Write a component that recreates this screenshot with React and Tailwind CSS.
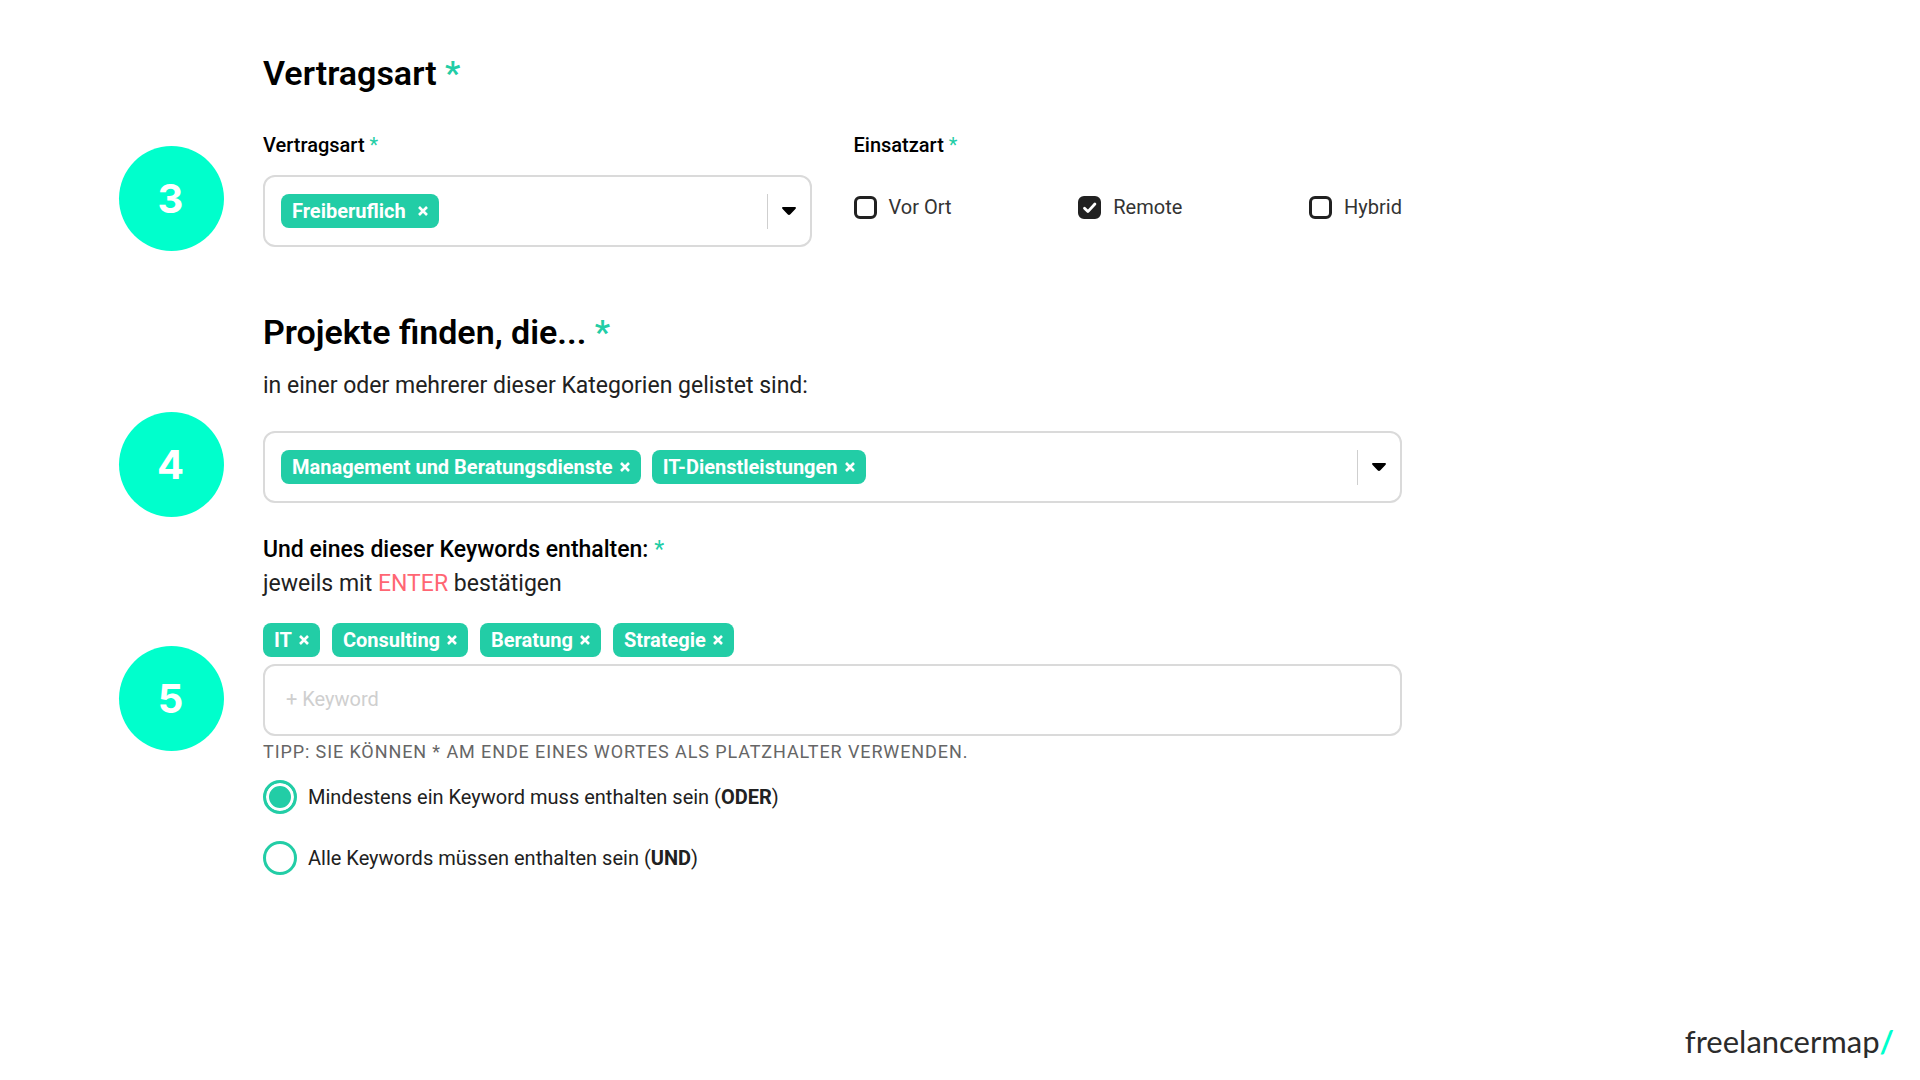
import React, { useState } from 'react';

const Required = () => <span className="font-normal text-[#22cda6]">*</span>;

const Badge = ({ number, className = '' }) => (
    <div
        className={`flex size-[105px] shrink-0 items-center justify-center rounded-full bg-[#00ffcc] pr-[2px] font-['Inter',sans-serif] text-[40px] font-bold text-white ${className}`}
    >
        {number}
    </div>
);

const Tag = ({ label, wide, onRemove }) => (
    <span
        className={`flex h-[34px] items-center rounded-lg bg-[#22cda6] px-[11px] text-xl font-bold text-white ${wide ? 'gap-3' : 'gap-[7px]'}`}
    >
        <span className="leading-6">{label}</span>
        <button type="button" aria-label={`${label} entfernen`} onClick={onRemove}>
            <svg className="size-[10px]" viewBox="0 0 10 10" fill="none" stroke="currentColor" strokeWidth="2.6">
                <path d="M1 1l8 8M9 1L1 9" />
            </svg>
        </button>
    </span>
);

const TagSelect = ({ id, label, options, initial, wide }) => {
    const [selected, setSelected] = useState(initial);

    return (
        <div className="flex h-[72px] items-center gap-[11px] rounded-xl border-2 border-[#dadada] pl-4">
            {selected.map((item) => (
                <Tag
                    key={item}
                    label={item}
                    wide={wide}
                    onRemove={() => setSelected(selected.filter((s) => s !== item))}
                />
            ))}
            <div className="relative flex h-full flex-1 items-center">
                <select
                    id={id}
                    aria-label={label}
                    value=""
                    onChange={(e) => setSelected([...selected, e.target.value])}
                    className="h-full w-full appearance-none bg-transparent text-xl outline-none"
                >
                    <option value=""></option>
                    {options
                        .filter((option) => !selected.includes(option))
                        .map((option) => (
                            <option key={option}>{option}</option>
                        ))}
                </select>
                <div className="pointer-events-none absolute right-0 flex h-[35px] items-center border-l border-[#cfcfcf] px-[14px]">
                    <svg className="h-2 w-[14px]" viewBox="0 0 14 8" fill="#000">
                        <path d="M1.2 0h11.6c1 0 1.5 1 .8 1.7L8.4 7.3c-.8.9-2 .9-2.8 0L.4 1.7C-.3 1 .2 0 1.2 0z" />
                    </svg>
                </div>
            </div>
        </div>
    );
};

const Checkbox = ({ label, defaultChecked }) => (
    <label className="flex items-center gap-3 text-xl leading-7 text-[#333]">
        <span className="relative flex">
            <input
                type="checkbox"
                defaultChecked={defaultChecked}
                className="peer size-[23px] appearance-none rounded-md border-3 border-[#212121] checked:bg-[#212121]"
            />
            <svg
                className="pointer-events-none absolute inset-0 hidden size-[23px] peer-checked:block"
                viewBox="0 0 23 23"
                fill="none"
                stroke="#fff"
                strokeWidth="2.8"
                strokeLinecap="round"
                strokeLinejoin="round"
            >
                <path d="M6.5 12.2l3.4 3.4 7-7.6" />
            </svg>
        </span>
        {label}
    </label>
);

const Radio = ({ children, defaultChecked }) => (
    <label className="flex items-center gap-[11px] text-xl text-[#212121]">
        <input
            type="radio"
            name="keyword-mode"
            defaultChecked={defaultChecked}
            className="size-[34px] appearance-none rounded-full border-3 border-[#22cda6] checked:bg-[#22cda6] checked:shadow-[inset_0_0_0_3px_#fff]"
        />
        <span>{children}</span>
    </label>
);

const App = () => {
    const [keywords, setKeywords] = useState(['IT', 'Consulting', 'Beratung', 'Strategie']);
    const [draft, setDraft] = useState('');

    const addKeyword = (e) => {
        if (e.key !== 'Enter' || !draft.trim()) return;
        e.preventDefault();
        setKeywords([...keywords, draft.trim()]);
        setDraft('');
    };

    return (
        <div className="flex min-h-screen flex-col bg-white font-['Roboto',sans-serif] text-black">
            <form className="grid w-full max-w-[1402px] grid-cols-[105px_1fr] gap-x-[39px] pt-[51px] pl-[119px]">
                <h2 className="col-start-2 text-[34px] leading-[44px] font-semibold">
                    Vertragsart <span className="text-[#22cda6]">*</span>
                </h2>

                <Badge number="3" className="mt-[51px]" />
                <div className="mt-9 grid grid-cols-2 gap-x-[42px]">
                    <div>
                        <label htmlFor="contract" className="block text-xl leading-7 font-medium">
                            Vertragsart <Required />
                        </label>
                        <div className="mt-4">
                            <TagSelect
                                id="contract"
                                options={['Freiberuflich', 'Festanstellung', 'Arbeitnehmerüberlassung']}
                                initial={['Freiberuflich']}
                                wide
                            />
                        </div>
                    </div>
                    <fieldset>
                        <legend className="text-xl leading-7 font-medium">
                            Einsatzart <Required />
                        </legend>
                        <div className="mt-[34px] flex justify-between">
                            <Checkbox label="Vor Ort" />
                            <Checkbox label="Remote" defaultChecked />
                            <Checkbox label="Hybrid" />
                        </div>
                    </fieldset>
                </div>

                <div className="col-start-2 mt-[59px] mb-[10px]">
                    <h2 className="text-[34px] leading-[44px] font-semibold">
                        Projekte finden, die... <span className="text-[#22cda6]">*</span>
                    </h2>
                    <p className="mt-4 text-[23px] leading-8 text-[#212121]">
                        in einer oder mehrerer dieser Kategorien gelistet sind:
                    </p>
                </div>

                <Badge number="4" />
                <div className="mt-[19px]">
                    <TagSelect
                        label="Kategorien"
                        options={['Management und Beratungsdienste', 'IT-Dienstleistungen', 'Design und Medien']}
                        initial={['Management und Beratungsdienste', 'IT-Dienstleistungen']}
                    />
                </div>

                <div className="col-start-2 mt-4 mb-[22px] text-[23px] leading-[34px]">
                    <label htmlFor="keyword" className="block font-medium">
                        Und eines dieser Keywords enthalten: <Required />
                    </label>
                    <p className="text-[#212121]">
                        jeweils mit <span className="text-[#ff6673]">ENTER</span> bestätigen
                    </p>
                </div>

                <Badge number="5" className="mt-[23px]" />
                <div>
                    <div className="flex gap-3">
                        {keywords.map((keyword) => (
                            <Tag
                                key={keyword}
                                label={keyword}
                                onRemove={() => setKeywords(keywords.filter((k) => k !== keyword))}
                            />
                        ))}
                    </div>
                    <input
                        id="keyword"
                        type="text"
                        placeholder="+ Keyword"
                        value={draft}
                        onChange={(e) => setDraft(e.target.value)}
                        onKeyDown={addKeyword}
                        className="mt-[7px] h-[72px] w-full rounded-xl border-2 border-[#dadada] px-[21px] pb-[2px] text-xl outline-none placeholder:text-[#cfcfcf]"
                    />
                    <p className="mt-1 text-[18px] leading-6 tracking-wider text-[#666] uppercase">
                        Tipp: Sie können * am Ende eines Wortes als Platzhalter verwenden.
                    </p>
                    <div className="mt-4 flex flex-col gap-[27px]">
                        <Radio defaultChecked>
                            Mindestens ein Keyword muss enthalten sein (<b className="font-bold">ODER</b>)
                        </Radio>
                        <Radio>
                            Alle Keywords müssen enthalten sein (<b className="font-bold">UND</b>)
                        </Radio>
                    </div>
                </div>
            </form>

            <footer className="mt-auto flex justify-end pr-[26px] pb-[19px]">
                <a href="#" className="font-['Lato',sans-serif] text-[31px] leading-10 text-[#2b2b2b]">
                    freelancermap<span className="font-bold text-[#00ffcc]">/</span>
                </a>
            </footer>
        </div>
    );
};

export default App;
